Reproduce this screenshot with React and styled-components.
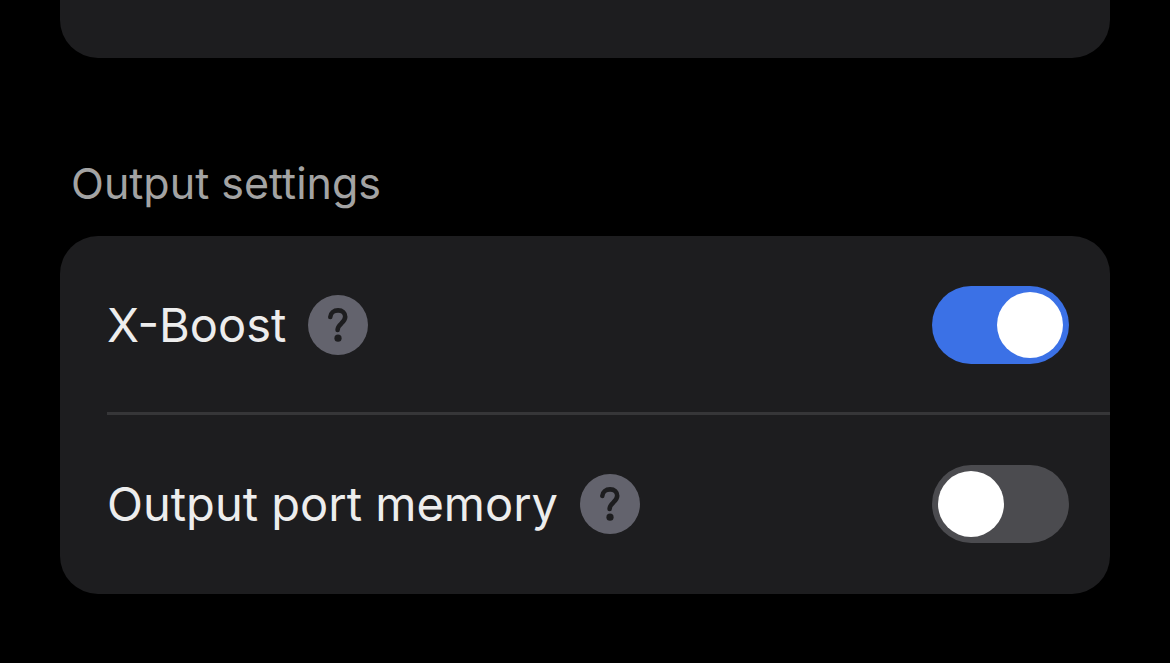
import React, { useState } from 'react';
import styled, { createGlobalStyle } from 'styled-components';

const GlobalStyle = createGlobalStyle`
  body {
    margin: 0;
    background: #000;
    font-family: Inter, 'Liberation Sans', sans-serif;
  }
`;

const Page = styled.main`
  padding: 0 60px 60px;
`;

const Card = styled.section`
  background: #1d1d1f;
  border-radius: 38px;
`;

const PreviousCard = styled(Card)`
  height: 58px;
  border-radius: 0 0 38px 38px;
`;

const SectionTitle = styled.h2`
  margin: 99px 11px 27px;
  color: #a3a3a3;
  font-size: 43px;
  font-weight: 400;
  line-height: 52px;
`;

const Row = styled.div`
  display: flex;
  align-items: center;
  margin-left: 47px;
  padding: 50px 41px 51px 0;

  &:not(:last-child) {
    padding-bottom: 48px;
    border-bottom: 3px solid #363638;
  }
`;

const Label = styled.label`
  color: #ededed;
  font-size: 47px;
  font-weight: 400;
  line-height: 60px;
`;

const HelpButton = styled.button`
  display: flex;
  flex-shrink: 0;
  margin: 0 auto 0 22px;
  padding: 0;
  border: 0;
  border-radius: 50%;
  background: #63636d;
  color: #1d1d1f;
  cursor: pointer;
`;

const Switch = styled.input`
  appearance: none;
  box-sizing: border-box;
  flex-shrink: 0;
  display: flex;
  justify-content: flex-start;
  width: 137px;
  height: 78px;
  margin: 0;
  padding: 6px;
  border-radius: 39px;
  background: #4b4b4f;
  cursor: pointer;

  &::before {
    content: '';
    width: 66px;
    height: 66px;
    border-radius: 50%;
    background: #fff;
  }

  &:checked {
    justify-content: flex-end;
    background: #3b71e6;
  }
`;

function QuestionIcon() {
  return (
    <svg width="60" height="60" viewBox="0 0 60 60" fill="none" aria-hidden="true">
      <path
        d="M22.3 22C22.5 18 25.8 15.4 30.1 15.4C34.4 15.4 37.2 18.2 37.2 21.8C37.2 24.6 35.7 26.2 33.6 28.2C31.2 30.4 29.6 31.8 29.6 35"
        stroke="currentColor"
        strokeWidth="4.6"
        strokeLinecap="round"
      />
      <circle cx="30" cy="43.2" r="3.6" fill="currentColor" />
    </svg>
  );
}

function SettingRow({ setting, onToggle }) {
  return (
    <Row>
      <Label htmlFor={setting.id}>{setting.name}</Label>
      <HelpButton type="button" aria-label={`About ${setting.name}`}>
        <QuestionIcon />
      </HelpButton>
      <Switch
        id={setting.id}
        type="checkbox"
        role="switch"
        checked={setting.enabled}
        onChange={() => onToggle(setting.id)}
      />
    </Row>
  );
}

function App() {
  const [settings, setSettings] = useState([
    { id: 'x-boost', name: 'X-Boost', enabled: true },
    { id: 'port-memory', name: 'Output port memory', enabled: false },
  ]);

  const onToggle = (id) =>
    setSettings(
      settings.map((setting) =>
        setting.id === id ? { ...setting, enabled: !setting.enabled } : setting
      )
    );

  return (
    <>
      <GlobalStyle />
      <Page>
        <PreviousCard />
        <SectionTitle>Output settings</SectionTitle>
        <Card>
          {settings.map((setting) => (
            <SettingRow key={setting.id} setting={setting} onToggle={onToggle} />
          ))}
        </Card>
      </Page>
    </>
  );
}

export default App;
